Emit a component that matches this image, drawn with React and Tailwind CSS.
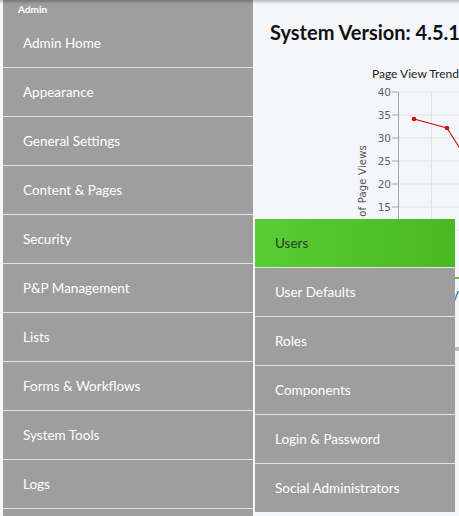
import React from "react";

const adminItems = [
  "Admin Home",
  "Appearance",
  "General Settings",
  "Content & Pages",
  "Security",
  "P&P Management",
  "Lists",
  "Forms & Workflows",
  "System Tools",
  "Logs",
  "",
];

const securityItems = [
  "Users",
  "User Defaults",
  "Roles",
  "Components",
  "Login & Password",
  "Social Administrators",
];

const PageViewChart = () => {
  const ticks = [40, 35, 30, 25, 20, 15, 10];
  return (
    <svg width="206" height="220" className="block">
      <text x="119" y="23" fontSize="12" fill="#222" fontFamily="Lato, sans-serif">
        Page View Trend
      </text>
      {ticks.map((t, i) => {
        const y = 37 + i * 23;
        return (
          <g key={t}>
            <line x1="145" y1={y} x2="206" y2={y} stroke="#dfe2e8" strokeWidth="1" />
            <line x1="139" y1={y} x2="145" y2={y} stroke="#9aa6be" strokeWidth="1" />
            <text x="138" y={y + 4} fontSize="10.5" textAnchor="end" fill="#5a5f75" fontFamily="'DejaVu Sans', sans-serif">
              {t}
            </text>
          </g>
        );
      })}
      <line x1="178.5" y1="37" x2="178.5" y2="220" stroke="#dfe2e8" strokeWidth="1" />
      <line x1="145.5" y1="37" x2="145.5" y2="220" stroke="#9aa6be" strokeWidth="1" />
      <text
        x="113"
        y="90"
        fontSize="10"
        fill="#555"
        textAnchor="end"
        letterSpacing="0.2"
        fontFamily="'DejaVu Sans', sans-serif"
        transform="rotate(-90 113 90)"
      >
        Number of Page Views
      </text>
      <polyline points="161,64 194,73 230,130" fill="none" stroke="#cc1010" strokeWidth="1.2" />
      <circle cx="161" cy="64" r="2.3" fill="#cc1010" />
      <circle cx="194" cy="73" r="2.3" fill="#cc1010" />
    </svg>
  );
};

export default function App() {
  return (
    <div className="relative w-[459px] h-[516px] overflow-hidden bg-[#f4f6f9]" style={{ fontFamily: "Lato, 'Liberation Sans', sans-serif" }}>
      <div className="flex h-full pl-[3px]">
        <nav className="w-[250px] shrink-0 bg-[#9e9e9e]">
          <div className="h-[19px] pl-[15px] pt-[3px] text-[10px] font-bold leading-[12px] text-white">Admin</div>
          {adminItems.map((item, i) => (
            <div
              key={i}
              className="flex h-[49px] items-center border-b border-[#e3e3e3] pl-[20px] text-[13.5px] text-white"
            >
              {item}
            </div>
          ))}
        </nav>

        <main className="flex-1 pl-[17px] pt-[18px]">
          <h1 className="whitespace-nowrap text-[20px] font-bold leading-[28px] text-[#111]">
            System Version: 4.5.14
          </h1>
          <div className="ml-[-17px] mt-[9px]">
            <PageViewChart />
          </div>
          <div className="mt-[2px] border-t-2 border-[#6cbf3c] pt-2 pl-[180px] text-[13px] text-[#3366aa] whitespace-nowrap">
            View all
          </div>
          <div className="mt-[40px] h-[4px] bg-[#bdbdbd]" />
          <div className="mt-[6px] pl-[190px] text-[12px] text-[#888] whitespace-nowrap">g</div>
          <div className="mt-[24px] pl-[190px] text-[13px] text-[#222] whitespace-nowrap">F</div>
        </main>
      </div>

      <div className="pointer-events-none absolute inset-x-0 top-0 h-[4px] bg-gradient-to-b from-black/25 to-transparent" />

      <div className="absolute left-[255px] top-[219px] w-[200px] bg-[#9e9e9e]">
        {securityItems.map((item, i) => (
          <div
            key={item}
            className={
              i === 0
                ? "flex h-[49px] items-center border-b border-[#e3e3e3] bg-gradient-to-r from-[#58cd34] to-[#4bb822] pl-[20px] text-[13.5px] text-[#2d3b2a]"
                : i === securityItems.length - 1
                ? "flex h-[48px] items-center pl-[20px] text-[13.5px] text-white"
                : "flex h-[49px] items-center border-b border-[#e3e3e3] pl-[20px] text-[13.5px] text-white"
            }
          >
            {item}
          </div>
        ))}
      </div>
    </div>
  );
}
